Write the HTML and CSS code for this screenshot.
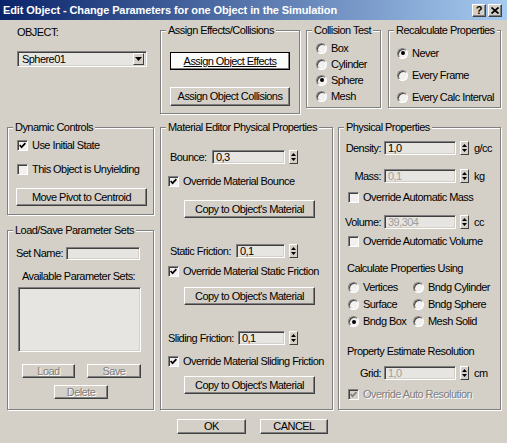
FILE: index.html
```html
<!DOCTYPE html>
<html lang="en">
<head>
    <meta charset="UTF-8">
    <meta name="viewport" content="width=device-width, initial-scale=1.0">
    <title>Edit Object</title>
    <link rel="stylesheet" href="styles.css">
</head>
<body>
<div class="window">
    <div class="titlebar">
        <span class="title">Edit Object - Change Parameters for one Object in the Simulation</span>
        <div class="caption-btns">
            <span class="cap-btn">?</span>
            <span class="cap-btn"><svg width="8" height="7" viewBox="0 0 8 7"><path d="M0.5 0.5 L7.5 6.5 M7.5 0.5 L0.5 6.5" stroke="#000" stroke-width="1.7"/></svg></span>
        </div>
    </div>

    <div class="client">
        <div class="row-top">
            <div class="object-pick">
                <div>OBJECT:</div>
                <div class="combo sunken">
                    <span class="combo-value">Sphere01</span>
                    <span class="combo-btn"><svg width="7" height="4" viewBox="0 0 7 4"><path d="M0 0 H7 L3.5 4 Z" fill="#000"/></svg></span>
                </div>
            </div>

            <fieldset class="group assign">
                <legend>Assign Effects/Collisions</legend>
                <button class="btn btn-default effects-btn"><u>Assign Object Effects</u></button>
                <button class="btn collisions-btn">Assign Object Collisions</button>
            </fieldset>

            <fieldset class="group collision">
                <legend>Collision Test</legend>
                <div class="collision-list">
                    <div class="opt"><span class="radio"></span>Box</div>
                    <div class="opt"><span class="radio"></span>Cylinder</div>
                    <div class="opt"><span class="radio on"></span>Sphere</div>
                    <div class="opt"><span class="radio"></span>Mesh</div>
                </div>
            </fieldset>

            <fieldset class="group recalc">
                <legend>Recalculate Properties</legend>
                <div class="recalc-list">
                    <div class="opt"><span class="radio on"></span>Never</div>
                    <div class="opt"><span class="radio"></span>Every Frame</div>
                    <div class="opt"><span class="radio"></span>Every Calc Interval</div>
                </div>
            </fieldset>
        </div>

        <div class="row-main">
            <div class="left-col">
                <fieldset class="group dynamic">
                    <legend>Dynamic Controls</legend>
                    <div class="check dyn-check1"><span class="box"><svg width="7" height="7" viewBox="0 0 7 7"><polyline points="0.6,3 2.6,5.2 6.4,1.2" fill="none" stroke="#000" stroke-width="1.7"/></svg></span>Use Initial State</div>
                    <div class="check dyn-check2"><span class="box"></span>This Object is Unyielding</div>
                    <button class="btn pivot-btn">Move Pivot to Centroid</button>
                </fieldset>

                <fieldset class="group loadsave">
                    <legend>Load/Save Parameter Sets</legend>
                    <div class="setname-row">
                        <span>Set Name:</span>
                        <span class="field setname-field"></span>
                    </div>
                    <div class="sets-title">Available Parameter Sets:</div>
                    <div class="listbox sunken"></div>
                    <div class="load-row">
                        <button class="btn disabled load-btn">Load</button>
                        <button class="btn disabled save-btn">Save</button>
                    </div>
                    <button class="btn disabled delete-btn">Delete</button>
                </fieldset>
            </div>

            <fieldset class="group material">
                <legend>Material Editor Physical Properties</legend>
                <div class="param bounce-row">
                    <span>Bounce:</span>
                    <span class="field bounce-field">0,3</span>
                    <span class="spinner"><svg width="7" height="12" viewBox="0 0 7 12"><path d="M1 5 L3.5 2 L6 5 Z M1 7 H6 L3.5 10 Z" fill="#000"/></svg></span>
                </div>
                <div class="check mat-check1"><span class="box"><svg width="7" height="7" viewBox="0 0 7 7"><polyline points="0.6,3 2.6,5.2 6.4,1.2" fill="none" stroke="#000" stroke-width="1.7"/></svg></span>Override Material Bounce</div>
                <button class="btn copy-btn copy1">Copy to Object's Material</button>

                <div class="param static-row">
                    <span>Static Friction:</span>
                    <span class="field static-field">0,1</span>
                    <span class="spinner"><svg width="7" height="12" viewBox="0 0 7 12"><path d="M1 5 L3.5 2 L6 5 Z M1 7 H6 L3.5 10 Z" fill="#000"/></svg></span>
                </div>
                <div class="check mat-check2"><span class="box"><svg width="7" height="7" viewBox="0 0 7 7"><polyline points="0.6,3 2.6,5.2 6.4,1.2" fill="none" stroke="#000" stroke-width="1.7"/></svg></span>Override Material Static Friction</div>
                <button class="btn copy-btn copy2">Copy to Object's Material</button>

                <div class="param sliding-row">
                    <span>Sliding Friction:</span>
                    <span class="field sliding-field">0,1</span>
                    <span class="spinner"><svg width="7" height="12" viewBox="0 0 7 12"><path d="M1 5 L3.5 2 L6 5 Z M1 7 H6 L3.5 10 Z" fill="#000"/></svg></span>
                </div>
                <div class="check mat-check3"><span class="box"><svg width="7" height="7" viewBox="0 0 7 7"><polyline points="0.6,3 2.6,5.2 6.4,1.2" fill="none" stroke="#000" stroke-width="1.7"/></svg></span>Override Material Sliding Friction</div>
                <button class="btn copy-btn copy3">Copy to Object's Material</button>
            </fieldset>

            <fieldset class="group physical">
                <legend>Physical Properties</legend>
                <div class="prop density-row">
                    <span class="prop-label">Density:</span>
                    <span class="field prop-field">1,0</span>
                    <span class="spinner"><svg width="7" height="12" viewBox="0 0 7 12"><path d="M1 5 L3.5 2 L6 5 Z M1 7 H6 L3.5 10 Z" fill="#000"/></svg></span>
                    <span class="unit">g/cc</span>
                </div>
                <div class="prop mass-row">
                    <span class="prop-label">Mass:</span>
                    <span class="field prop-field dim">0,1</span>
                    <span class="spinner"><svg width="7" height="12" viewBox="0 0 7 12"><path d="M1 5 L3.5 2 L6 5 Z M1 7 H6 L3.5 10 Z" fill="#000"/></svg></span>
                    <span class="unit">kg</span>
                </div>
                <div class="check phys-check1"><span class="box"></span>Override Automatic Mass</div>
                <div class="prop volume-row">
                    <span class="prop-label">Volume:</span>
                    <span class="field prop-field dim">39,304</span>
                    <span class="spinner"><svg width="7" height="12" viewBox="0 0 7 12"><path d="M1 5 L3.5 2 L6 5 Z M1 7 H6 L3.5 10 Z" fill="#000"/></svg></span>
                    <span class="unit">cc</span>
                </div>
                <div class="check phys-check2"><span class="box"></span>Override Automatic Volume</div>

                <div class="phys-text calc-title">Calculate Properties Using</div>
                <div class="calc-grid">
                    <div class="opt"><span class="radio"></span>Vertices</div>
                    <div class="opt"><span class="radio"></span>Bndg Cylinder</div>
                    <div class="opt"><span class="radio"></span>Surface</div>
                    <div class="opt"><span class="radio"></span>Bndg Sphere</div>
                    <div class="opt"><span class="radio on"></span>Bndg Box</div>
                    <div class="opt"><span class="radio"></span>Mesh Solid</div>
                </div>

                <div class="phys-text res-title">Property Estimate Resolution</div>
                <div class="prop grid-row">
                    <span class="prop-label">Grid:</span>
                    <span class="field prop-field dim">1,0</span>
                    <span class="spinner"><svg width="7" height="12" viewBox="0 0 7 12"><path d="M1 5 L3.5 2 L6 5 Z M1 7 H6 L3.5 10 Z" fill="#000"/></svg></span>
                    <span class="unit">cm</span>
                </div>
                <div class="check disabled phys-check3"><span class="box"><svg width="7" height="7" viewBox="0 0 7 7"><polyline points="0.6,3 2.6,5.2 6.4,1.2" fill="none" stroke="#808080" stroke-width="1.7"/></svg></span>Override Auto Resolution</div>
            </fieldset>
        </div>

        <div class="footer">
            <button class="btn ok-btn">OK</button>
            <button class="btn cancel-btn">CANCEL</button>
        </div>
    </div>
</div>
</body>
</html>
```

FILE: styles.css
```css
* {
    box-sizing: border-box;
}

body {
    margin: 0;
    background-color: #d4d0c8;
    font-family: "Liberation Sans", Arial, sans-serif;
    font-size: 11px;
    line-height: 13px;
    letter-spacing: -0.55px;
    white-space: nowrap;
    color: #000;
}

.window {
    width: 507px;
    height: 443px;
    overflow: hidden;
    background: #d4d0c8;
}

/* title bar */
.titlebar {
    height: 20px;
    display: flex;
    align-items: center;
    justify-content: space-between;
    padding: 0 5px 0 3px;
    background: linear-gradient(to right, #0a246a, #a6caf0);
    color: #fff;
    font-weight: bold;
    letter-spacing: -0.1px;
}

.caption-btns {
    display: flex;
    gap: 2px;
}

.cap-btn {
    width: 14px;
    height: 13px;
    display: flex;
    align-items: center;
    justify-content: center;
    background: #d4d0c8;
    border: 1px solid;
    border-color: #fff #404040 #404040 #fff;
    box-shadow: inset -1px -1px #808080;
    color: #000;
    line-height: 11px;
}

.client {
    padding: 0 6px 0 7px;
}

/* common controls */
.group {
    margin: 0;
    padding: 0;
    min-width: 0;
    border: 1px solid #808080;
    box-shadow: inset 1px 1px #fff, 1px 1px #fff;
}

.group legend {
    margin-left: 5px;
    padding: 0 2px;
    line-height: 13px;
    background: #d4d0c8;
}

.sunken,
.field {
    border: 1px solid;
    border-color: #808080 #fff #fff #808080;
    box-shadow: inset 1px 1px #404040, inset -1px -1px #d4d0c8;
    background: #e6e5e2;
}

.field {
    display: block;
    height: 14px;
    padding-left: 3px;
    line-height: 12px;
}

.field.dim {
    color: #a09e9a;
}

.btn {
    display: block;
    padding: 0;
    font: inherit;
    letter-spacing: inherit;
    white-space: nowrap;
    color: #000;
    text-align: center;
    background: #d4d0c8;
    border: 1px solid;
    border-color: #fff #404040 #404040 #fff;
    box-shadow: inset -1px -1px #808080;
}

.btn-default {
    border-color: #000;
    background: #fbfbfa;
    box-shadow: inset -1px -1px #808080, inset 1px 1px #fff;
}

.btn.disabled,
.check.disabled {
    color: #808080;
    text-shadow: 1px 1px #fff;
}

.spinner {
    width: 9px;
    height: 14px;
    flex: none;
    display: flex;
    align-items: center;
    justify-content: center;
    background: #d4d0c8;
    border: 1px solid;
    border-color: #fff #404040 #404040 #fff;
}

.check {
    display: flex;
    align-items: center;
    height: 13px;
}

.box {
    width: 11px;
    height: 11px;
    flex: none;
    margin-right: 4px;
    display: flex;
    align-items: center;
    justify-content: center;
    border: 1px solid;
    border-color: #808080 #fff #fff #808080;
    box-shadow: inset 1px 1px #404040;
    background: #f2f1ef;
}

.check.disabled .box {
    background: #d4d0c8;
}

.opt {
    display: flex;
    align-items: center;
}

.radio {
    position: relative;
    width: 11px;
    height: 11px;
    flex: none;
    margin-right: 4px;
    border-radius: 50%;
    border: 1px solid;
    border-color: #808080 #fff #fff #808080;
    box-shadow: inset 1px 1px #404040;
    background: #f2f1ef;
}

.radio.on::after {
    content: "";
    position: absolute;
    left: 2.5px;
    top: 2.5px;
    width: 4px;
    height: 4px;
    border-radius: 50%;
    background: #000;
}

/* top row */
.row-top {
    display: flex;
    align-items: flex-start;
    height: 90px;
    margin-top: 4px;
}

.object-pick {
    width: 147px;
    margin-right: 6px;
    padding: 2px 0 0 10px;
}

.combo {
    width: 130px;
    height: 16px;
    margin-top: 12px;
    display: flex;
    align-items: center;
    justify-content: space-between;
    padding: 0 2px 0 4px;
}

.combo-btn {
    width: 11px;
    height: 12px;
    display: flex;
    align-items: center;
    justify-content: center;
    background: #d4d0c8;
    border: 1px solid;
    border-color: #fff #404040 #404040 #fff;
}

.assign {
    width: 140px;
    height: 90px;
    margin-right: 6px;
}

.effects-btn {
    width: 120px;
    height: 18px;
    margin: 15px 0 0 9px;
}

.collisions-btn {
    width: 120px;
    height: 19px;
    margin: 17px 0 0 9px;
}

.collision {
    width: 75px;
    height: 84px;
    margin-right: 7px;
}

.collision-list {
    padding: 3px 0 0 9px;
}

.collision-list .opt {
    height: 16px;
}

.recalc {
    width: 113px;
    height: 84px;
}

.recalc-list {
    padding: 5px 0 0 8px;
}

.recalc-list .opt {
    height: 22px;
}

/* main row */
.row-main {
    display: flex;
    height: 289px;
    margin-top: 7px;
}

.left-col {
    width: 147px;
    margin-right: 6px;
    display: flex;
    flex-direction: column;
}

.dynamic {
    height: 94px;
}

.dynamic .check {
    padding-left: 9px;
}

.dyn-check1 {
    margin-top: 5px;
}

.dyn-check2 {
    margin-top: 11px;
}

.pivot-btn {
    width: 131px;
    height: 18px;
    margin: 12px 0 0 8px;
}

.loadsave {
    height: 186px;
    margin-top: 9px;
}

.setname-row {
    display: flex;
    align-items: center;
    height: 13px;
    margin-top: 10px;
    padding: 0 13px 0 8px;
}

.setname-field {
    width: 74px;
    height: 13px;
    margin-left: auto;
}

.sets-title {
    margin-top: 10px;
    text-align: center;
    padding-right: 4px;
}

.listbox {
    width: 123px;
    height: 65px;
    margin: 4px 0 0 10px;
}

.load-row {
    display: flex;
    margin-top: 12px;
}

.load-btn {
    width: 53px;
    height: 14px;
    margin-left: 14px;
}

.save-btn {
    width: 54px;
    height: 14px;
    margin-left: 12px;
}

.delete-btn {
    width: 54px;
    height: 14px;
    margin: 7px 0 0 46px;
}

/* material editor */
.material {
    width: 173px;
    height: 289px;
    margin-right: 5px;
}

.param {
    display: flex;
    align-items: center;
    height: 14px;
    padding: 0 34px 0 9px;
}

.param .field {
    margin-left: auto;
}

.param .spinner {
    margin-left: 4px;
}

.bounce-row {
    margin-top: 16px;
}

.bounce-field {
    width: 73px;
}

.static-row {
    margin-top: 26px;
}

.static-field {
    width: 49px;
}

.sliding-row {
    margin-top: 26px;
    padding-left: 7px;
}

.sliding-field {
    width: 47px;
}

.material .check {
    padding-left: 7px;
}

.mat-check1 {
    margin-top: 11px;
}

.mat-check2 {
    margin-top: 7px;
}

.mat-check3 {
    margin-top: 10px;
}

.copy-btn {
    width: 131px;
    height: 18px;
    margin-left: 23px;
}

.copy1 {
    margin-top: 12px;
}

.copy2 {
    margin-top: 9px;
}

.copy3 {
    margin-top: 8px;
}

/* physical properties */
.physical {
    width: 163px;
    height: 289px;
}

.prop {
    display: flex;
    align-items: center;
    height: 14px;
}

.prop-label {
    width: 42px;
    margin-right: 3px;
    text-align: right;
}

.prop-field {
    width: 72px;
}

.prop .spinner {
    margin-left: 4px;
}

.unit {
    margin-left: 5px;
}

.density-row {
    margin-top: 7px;
}

.mass-row {
    margin-top: 14px;
}

.volume-row {
    margin-top: 11px;
}

.grid-row {
    margin-top: 8px;
}

.physical .check {
    padding-left: 9px;
}

.phys-check1 {
    margin-top: 8px;
}

.phys-check2 {
    margin-top: 6px;
}

.phys-check3 {
    margin-top: 8px;
}

.phys-text {
    padding-left: 8px;
}

.calc-title {
    margin-top: 14px;
}

.res-title {
    margin-top: 17px;
}

.calc-grid {
    display: grid;
    grid-template-columns: 65px auto;
    row-gap: 4px;
    margin-top: 6px;
    padding-left: 9px;
}

.calc-grid .opt {
    height: 13px;
}

/* OK / CANCEL */
.footer {
    display: flex;
    justify-content: center;
    gap: 14px;
    margin-top: 9px;
    padding-right: 3px;
}

.ok-btn {
    width: 69px;
    height: 15px;
}

.cancel-btn {
    width: 68px;
    height: 15px;
}
```
